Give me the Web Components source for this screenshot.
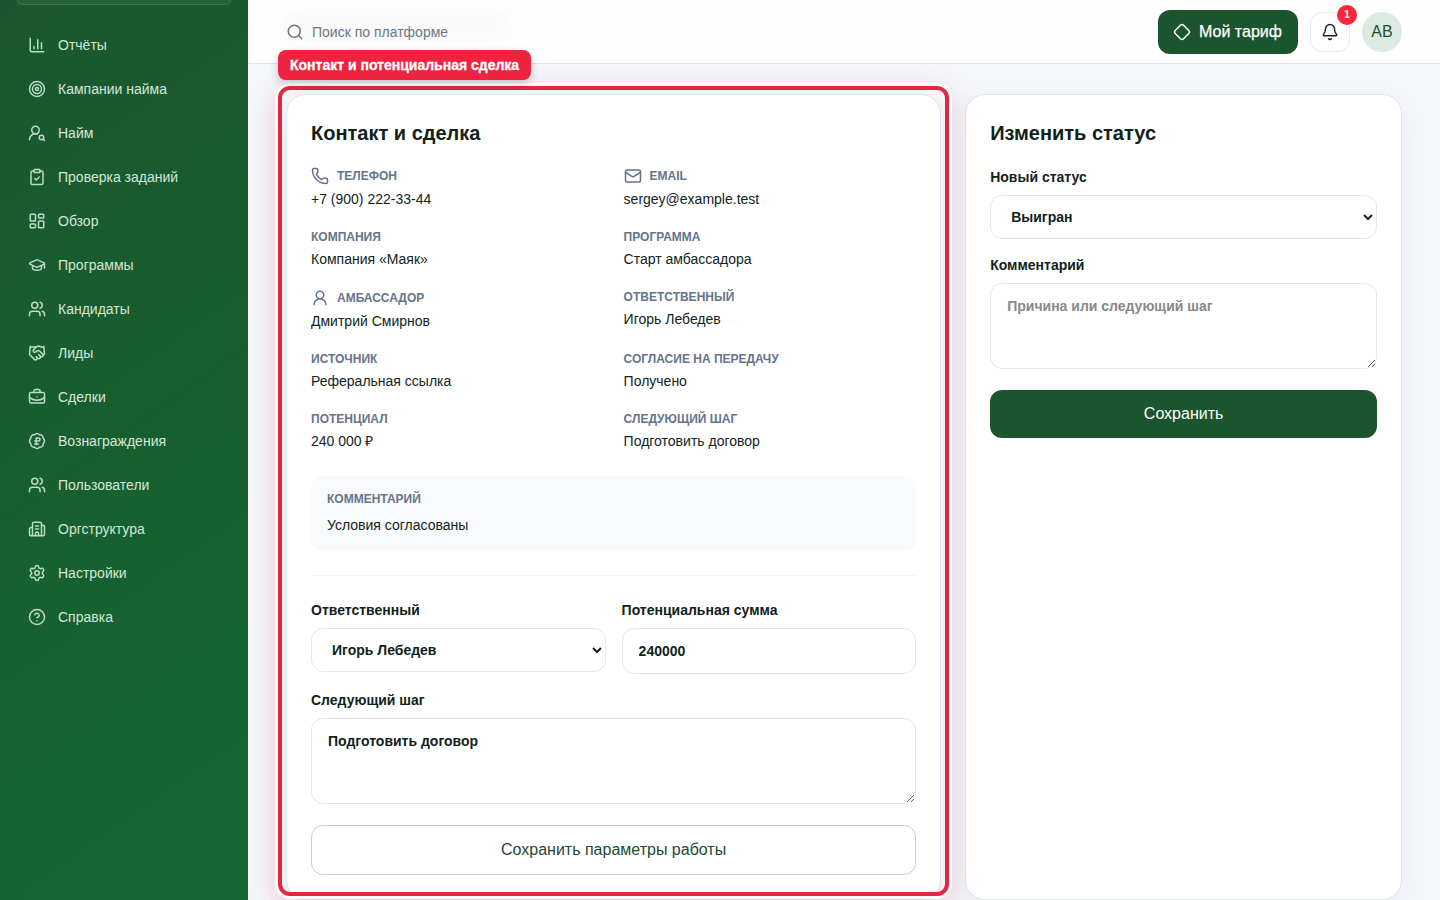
<!DOCTYPE html>
<html lang="ru">
<head>
<meta charset="utf-8">
<title>Контакт и сделка</title>
<style>
html,body{margin:0;height:100%;overflow:hidden}
body{font-family:"Liberation Sans",Arial,sans-serif;font-size:14px;line-height:20px;color:#12241c;background:#f4f6fa}
</style>
</head>
<body>
<crm-app></crm-app>
<script>
const ICONS={
chart:'<path d="M3 3v16a2 2 0 0 0 2 2h16M18 17V9M13 17V5M8 17v-3"/>',
target:'<circle cx="12" cy="12" r="10"/><circle cx="12" cy="12" r="6"/><circle cx="12" cy="12" r="2"/>',
usersearch:'<circle cx="10" cy="8" r="5"/><path d="M2 21a8 8 0 0 1 10.434-7.62"/><circle cx="18" cy="18" r="3"/><path d="m22 22-1.9-1.9"/>',
clipboard:'<rect width="8" height="4" x="8" y="2" rx="1"/><path d="M16 4h2a2 2 0 0 1 2 2v14a2 2 0 0 1-2 2H6a2 2 0 0 1-2-2V6a2 2 0 0 1 2-2h2M9 14l2 2 4-4"/>',
dash:'<rect width="7" height="9" x="3" y="3" rx="1"/><rect width="7" height="5" x="14" y="3" rx="1"/><rect width="7" height="9" x="14" y="12" rx="1"/><rect width="7" height="5" x="3" y="16" rx="1"/>',
cap:'<path d="M21.42 10.922a1 1 0 0 0-.019-1.838L12.83 5.18a2 2 0 0 0-1.66 0L2.6 9.08a1 1 0 0 0 0 1.832l8.57 3.908a2 2 0 0 0 1.66 0zM22 10v6M6 12.5V16a6 3 0 0 0 12 0v-3.5"/>',
users:'<path d="M16 21v-2a4 4 0 0 0-4-4H6a4 4 0 0 0-4 4v2M16 3.128a4 4 0 0 1 0 7.744M22 21v-2a4 4 0 0 0-3-3.87"/><circle cx="9" cy="7" r="4"/>',
hands:'<path d="m11 17 2 2a1 1 0 1 0 3-3"/><path d="m14 14 2.5 2.5a1 1 0 1 0 3-3l-3.88-3.88a3 3 0 0 0-4.24 0l-.88.88a1 1 0 1 1-3-3l2.81-2.81a5.79 5.79 0 0 1 7.06-.87l.47.28a2 2 0 0 0 1.42.25L21 4"/><path d="m21 3 1 11h-2M3 3 2 14l6.5 6.5a1 1 0 1 0 3-3M3 4h8"/>',
brief:'<path d="M12 12h.01M16 6V4a2 2 0 0 0-2-2h-4a2 2 0 0 0-2 2v2M22 13a18.15 18.15 0 0 1-20 0"/><rect width="20" height="14" x="2" y="6" rx="2"/>',
ruble:'<path d="M3.85 8.62a4 4 0 0 1 4.78-4.77 4 4 0 0 1 6.74 0 4 4 0 0 1 4.78 4.78 4 4 0 0 1 0 6.74 4 4 0 0 1-4.77 4.78 4 4 0 0 1-6.75 0 4 4 0 0 1-4.78-4.77 4 4 0 0 1 0-6.76ZM9 16h5M9 12h5a2 2 0 1 0 0-4h-3v9"/>',
building:'<path d="M10 12h4M10 8h4M14 21v-3a2 2 0 0 0-4 0v3M6 10H4a2 2 0 0 0-2 2v7a2 2 0 0 0 2 2h16a2 2 0 0 0 2-2V9a2 2 0 0 0-2-2h-2M6 21V5a2 2 0 0 1 2-2h8a2 2 0 0 1 2 2v16"/>',
gear:'<path d="M9.671 4.136a2.34 2.34 0 0 1 4.659 0 2.34 2.34 0 0 0 3.319 1.915 2.34 2.34 0 0 1 2.33 4.033 2.34 2.34 0 0 0 0 3.831 2.34 2.34 0 0 1-2.33 4.033 2.34 2.34 0 0 0-3.319 1.915 2.34 2.34 0 0 1-4.659 0 2.34 2.34 0 0 0-3.32-1.915 2.34 2.34 0 0 1-2.33-4.033 2.34 2.34 0 0 0 0-3.831A2.34 2.34 0 0 1 6.35 6.051a2.34 2.34 0 0 0 3.319-1.915"/><circle cx="12" cy="12" r="3"/>',
help:'<circle cx="12" cy="12" r="10"/><path d="M9.09 9a3 3 0 0 1 5.83 1c0 2-3 3-3 3M12 17h.01"/>',
phone:'<path d="M13.832 16.568a1 1 0 0 0 1.213-.303l.355-.465A2 2 0 0 1 17 15h3a2 2 0 0 1 2 2v3a2 2 0 0 1-2 2A18 18 0 0 1 2 4a2 2 0 0 1 2-2h3a2 2 0 0 1 2 2v3a2 2 0 0 1-.8 1.6l-.468.351a1 1 0 0 0-.292 1.233 14 14 0 0 0 6.392 6.384"/>',
mail:'<path d="m22 7-8.991 5.727a2 2 0 0 1-2.009 0L2 7"/><rect width="20" height="16" x="2" y="4" rx="2"/>',
user:'<circle cx="12" cy="8" r="5"/><path d="M20 21a8 8 0 0 0-16 0"/>',
bell:'<path d="M10.268 21a2 2 0 0 0 3.464 0M3.262 15.326A1 1 0 0 0 4 17h16a1 1 0 0 0 .74-1.673C19.41 13.956 18 12.499 18 8A6 6 0 0 0 6 8c0 4.499-1.411 5.956-2.738 7.326"/>',
diamond:'<path d="M2.7 10.3a2.41 2.41 0 0 0 0 3.41l7.59 7.59a2.41 2.41 0 0 0 3.41 0l7.59-7.59a2.41 2.41 0 0 0 0-3.41l-7.59-7.59a2.41 2.41 0 0 0-3.41 0Z"/>',
search:'<path d="m21 21-4.34-4.34"/><circle cx="11" cy="11" r="8"/>'
};
function define(name,html){
  const t=document.createElement('template');
  customElements.define(name,class extends HTMLElement{
    constructor(){super();this.attachShadow({mode:'open'})}
    connectedCallback(){
      if(this.shadowRoot.firstChild)return;
      t.innerHTML=typeof html==='function'?html(this):html;
      this.shadowRoot.append(t.content.cloneNode(true));
    }
  });
}
define('ui-icon',el=>`<style>:host{display:block;flex:none;width:18px;height:18px}svg{display:block;width:100%;height:100%}</style>
<svg viewBox="0 0 24 24" fill="none" stroke="currentColor" stroke-width="2" stroke-linecap="round" stroke-linejoin="round">${ICONS[el.getAttribute('name')]}</svg>`);

define('nav-item',el=>`<style>:host{display:flex;align-items:center;gap:12px;height:44px;padding:0 12px;box-sizing:border-box;color:#d5e7da}ui-icon{color:#b9dcc5}</style>
<ui-icon name="${el.getAttribute('icon')}"></ui-icon><span><slot></slot></span>`);

define('side-bar',`<style>
:host{display:flex;flex-direction:column;box-sizing:border-box;padding:0 16px;background:linear-gradient(145deg,#1b572e 0%,#185e2f 45%,#136833 100%);height:900px}
.box{height:5px;margin:0 1px 18px;box-sizing:border-box;border:1px solid rgba(255,255,255,.12);border-top:0;border-radius:0 0 10px 10px;background:rgba(255,255,255,.05)}
nav{display:flex;flex-direction:column}
</style><div class="box"></div><nav>
<nav-item icon="chart">Отчёты</nav-item><nav-item icon="target">Кампании найма</nav-item><nav-item icon="usersearch">Найм</nav-item><nav-item icon="clipboard">Проверка заданий</nav-item><nav-item icon="dash">Обзор</nav-item><nav-item icon="cap">Программы</nav-item><nav-item icon="users">Кандидаты</nav-item><nav-item icon="hands">Лиды</nav-item><nav-item icon="brief">Сделки</nav-item><nav-item icon="ruble">Вознаграждения</nav-item><nav-item icon="users">Пользователи</nav-item><nav-item icon="building">Оргструктура</nav-item><nav-item icon="gear">Настройки</nav-item><nav-item icon="help">Справка</nav-item></nav>`);

define('top-bar',`<style>
:host{display:flex;align-items:center;box-sizing:border-box;height:64px;padding:0 38px;background:#fefefe;border-bottom:1px solid #dfe3ea;position:relative}
.ghost{position:absolute;left:38px;top:14px;width:222px;height:22px;background:#f8f8f8;filter:blur(6px);border-radius:6px}
.search{display:flex;align-items:center;gap:8px;flex:1;color:#6a7687;position:relative}
.right{display:flex;align-items:center;gap:12px}
.plan{display:flex;align-items:center;justify-content:center;gap:8px;width:140px;height:44px;padding-right:1px;box-sizing:border-box;border-radius:12px;background:#1b552d;color:#fff;font-size:16px;line-height:24px;-webkit-text-stroke:.25px #fff}
.bell{position:relative;display:grid;place-items:center;box-sizing:border-box;width:40px;height:40px;border:1px solid #e6e9ee;border-radius:12px;background:#fff;color:#14261d}
.badge{position:absolute;right:-8px;top:-8px;width:20px;height:20px;border-radius:50%;background:#f9283a;color:#fff;font-size:10px;line-height:20px;font-weight:700;text-align:center}
.ava{width:40px;height:40px;border-radius:50%;background:#dcebe1;color:#1f4f33;font-size:16px;line-height:40px;text-align:center}
</style><div class="ghost"></div>
<div class="search"><ui-icon name="search"></ui-icon><span>Поиск по платформе</span></div>
<div class="right"><div class="plan"><ui-icon name="diamond"></ui-icon><span>Мой тариф</span></div>
<div class="bell"><ui-icon name="bell"></ui-icon><span class="badge">1</span></div><div class="ava">АВ</div></div>`);

define('panel-card',el=>`<style>
:host{display:block;box-sizing:border-box;padding:24px;background:#fff;border:1px solid #e1e4ea;border-radius:20px;box-shadow:0 8px 28px rgba(30,50,90,.05)}
h2{margin:0;font-size:20px;line-height:28px;font-weight:700;color:#10221a}
</style><h2>${el.getAttribute('heading')}</h2><slot></slot>`);

define('data-item',el=>`<style>
:host{display:block}
.l{display:flex;align-items:center;gap:8px;min-height:16px;font-size:12px;line-height:16px;font-weight:700;color:#64748b;margin-bottom:4px}
.v{line-height:20px}
</style><div class="l">${el.hasAttribute('icon')?`<ui-icon name="${el.getAttribute('icon')}"></ui-icon>`:''}<span>${el.getAttribute('label')}</span></div><div class="v"><slot></slot></div>`);

define('form-field',el=>{
  const k=el.getAttribute('kind'),v=el.getAttribute('value')||'',p=el.getAttribute('placeholder')||'';
  const c=k==='select'?`<select><option>${v}</option></select>`:k==='area'?`<textarea placeholder="${p}">${v}</textarea>`:`<input value="${v}">`;
  return `<style>
:host{display:block;min-width:0}
label{display:flex;flex-direction:column;gap:8px;font-weight:700;line-height:20px;color:#10221a}
select,input,textarea{display:block;box-sizing:border-box;width:100%;margin:0;font:inherit;color:#10221a;background:#fff;border:1px solid #e5e7eb;border-radius:12px;outline:0}
select{height:44px;padding:0 16px}input{height:46px;padding:12px 16px}
textarea{height:86px;padding:12px 16px;resize:vertical}
textarea::placeholder{color:#868a88}
</style><label><span>${el.getAttribute('label')}</span>${c}</label>`});

define('ui-button',`<style>
:host{display:flex;align-items:center;justify-content:center;box-sizing:border-box;height:48px;border-radius:12px;background:#1b552d;color:#fff;font-size:16px;line-height:24px}
:host([outline]){height:50px;background:#fff;color:#1b4a31;border:1px solid #bfd2ca}
</style><slot></slot>`);

define('focus-frame',`<style>
:host{position:absolute;box-sizing:border-box;border:4px solid #e0283f;border-radius:12px;box-shadow:0 0 0 3px rgba(255,255,255,.9),0 8px 28px rgba(220,38,70,.24);pointer-events:none}
span{position:absolute;left:-4px;top:-40px;height:30px;box-sizing:border-box;padding:0 12px;border-radius:8px;background:#ee233f;color:#fff;font-weight:700;font-size:14px;line-height:30px;white-space:nowrap;box-shadow:0 4px 10px rgba(30,40,60,.2);-webkit-text-stroke:.3px #fff}
</style><span><slot></slot></span>`);

define('crm-app',`<style>
:host{display:grid;grid-template-columns:248px 1fr;height:900px;overflow:hidden}
.page{display:flex;flex-direction:column;min-width:0;position:relative}
main{display:grid;grid-template-columns:1.5fr 1fr;gap:24px;padding:30px 38px 0;height:806px}
.data{display:grid;grid-template-columns:1fr 1fr;gap:20px;margin-top:20px}
.note{margin:25px 0 24px;padding:15px 16px;background:#f8fafb;border-radius:12px;height:75px;box-sizing:border-box}
.note b{display:block;font-size:12px;line-height:16px;color:#64748b;margin-bottom:8px}
.edit{border-top:1px solid #f3f5f6;padding-top:24px;display:grid;grid-template-columns:1fr 1fr;column-gap:16px;row-gap:16px}
.wide{grid-column:1/-1}
.edit ui-button{margin-top:5px}
.status{display:flex;flex-direction:column;gap:16px;margin-top:20px}
.status ui-button{margin-top:5px}
focus-frame{left:30px;top:86px;width:671px;height:810px}
</style>
<side-bar></side-bar>
<div class="page"><top-bar></top-bar>
<main>
<panel-card heading="Контакт и сделка">
<div class="data">
<data-item icon="phone" label="ТЕЛЕФОН">+7 (900) 222-33-44</data-item><data-item icon="mail" label="EMAIL">sergey@example.test</data-item>
<data-item label="КОМПАНИЯ">Компания «Маяк»</data-item><data-item label="ПРОГРАММА">Старт амбассадора</data-item>
<data-item icon="user" label="АМБАССАДОР">Дмитрий Смирнов</data-item><data-item label="ОТВЕТСТВЕННЫЙ">Игорь Лебедев</data-item>
<data-item label="ИСТОЧНИК">Реферальная ссылка</data-item><data-item label="СОГЛАСИЕ НА ПЕРЕДАЧУ">Получено</data-item>
<data-item label="ПОТЕНЦИАЛ">240 000 ₽</data-item><data-item label="СЛЕДУЮЩИЙ ШАГ">Подготовить договор</data-item>
</div>
<div class="note"><b>КОММЕНТАРИЙ</b>Условия согласованы</div>
<div class="edit">
<form-field kind="select" label="Ответственный" value="Игорь Лебедев"></form-field>
<form-field kind="input" label="Потенциальная сумма" value="240000"></form-field>
<form-field class="wide" kind="area" label="Следующий шаг" value="Подготовить договор"></form-field>
<ui-button class="wide" outline>Сохранить параметры работы</ui-button>
</div>
</panel-card>
<panel-card heading="Изменить статус">
<div class="status">
<form-field kind="select" label="Новый статус" value="Выигран"></form-field>
<form-field kind="area" label="Комментарий" placeholder="Причина или следующий шаг"></form-field>
<ui-button>Сохранить</ui-button>
</div>
</panel-card>
</main>
<focus-frame>Контакт и потенциальная сделка</focus-frame>
</div>`);
</script>
</body>
</html>
